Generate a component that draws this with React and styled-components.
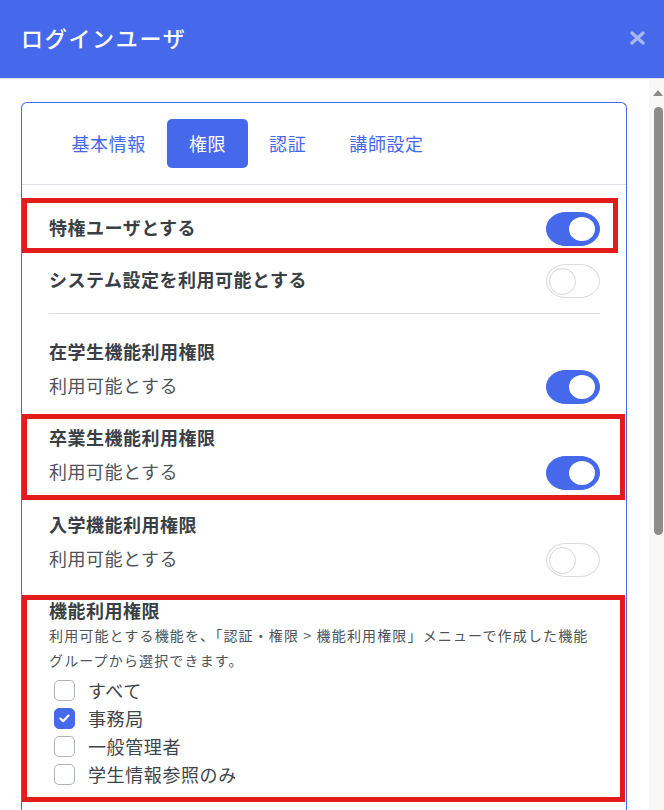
import React from "react";
import styled, { createGlobalStyle } from "styled-components";

const BLUE = "#4669ec";
const RED = "#e31b1b";

const Global = createGlobalStyle`
  html, body { margin: 0; padding: 0; background: #fff; }
  body { font-family: "Noto Sans CJK JP", "Noto Sans", sans-serif; }
  * { box-sizing: border-box; }
`;

const Modal = styled.div`
  height: 810px;
  display: flex;
  flex-direction: column;
  overflow: hidden;
`;

const Header = styled.header`
  height: 79px;
  flex: none;
  background: ${BLUE};
  border-bottom: 1px solid #dfe3ea;
  display: flex;
  align-items: center;
  justify-content: space-between;
  padding: 0 18px 0 21px;
`;

const Title = styled.h1`
  margin: 0;
  color: #fff;
  font-size: 22px;
  font-weight: 500;
  letter-spacing: 1.7px;
  line-height: 1;
  padding-bottom: 4px;
`;

const Close = styled.button`
  border: 0;
  background: transparent;
  padding: 0;
  width: 18px;
  height: 18px;
  display: flex;
  align-items: center;
  justify-content: center;
  margin-bottom: 3px;
`;

const Body = styled.div`
  flex: 1;
  display: flex;
  min-height: 0;
`;

const Content = styled.div`
  flex: 1;
  padding: 23px 22px 0 21px;
  overflow: hidden;
`;

const Track = styled.div`
  width: 15px;
  flex: none;
  background: #f8f8f8;
  display: flex;
  flex-direction: column;
  align-items: center;
`;

const Arrow = styled.div`
  margin-top: 11px;
  margin-left: 3px;
  width: 0;
  height: 0;
  border-left: 5px solid transparent;
  border-right: 5px solid transparent;
  border-bottom: 6px solid #8a8a8a;
`;

const Thumb = styled.div`
  margin-top: 11px;
  margin-left: 3px;
  width: 9px;
  height: 428px;
  border-radius: 5px;
  background: #8c8c8c;
`;

const Card = styled.div`
  border: 1px solid ${BLUE};
  border-bottom: 0;
  border-radius: 6px 6px 0 0;
  min-height: 800px;
`;

const Tabs = styled.nav`
  display: flex;
  padding: 16px 0 16px 28px;
  border-bottom: 1px solid #dee2e6;
`;

const Tab = styled.div`
  height: 49px;
  line-height: 49px;
  padding: 0 21.5px;
  font-size: 18px;
  letter-spacing: 0.6px;
  border-radius: 5px;
  color: ${(p) => (p.$active ? "#fff" : BLUE)};
  background: ${(p) => (p.$active ? BLUE : "transparent")};
`;

const Section = styled.div`
  padding: 0 26px 0 27px;
  color: #3c4147;
`;

const Highlight = styled.div`
  border: 5px solid ${RED};
  margin: ${(p) => p.$mt}px -${(p) => p.$right}px 0 -27px;
  padding: ${(p) => p.$pt}px ${(p) => p.$right - 5}px ${(p) => p.$pb}px 22px;
`;

const Row = styled.div`
  display: flex;
  justify-content: space-between;
  align-items: flex-start;
  margin-top: ${(p) => p.$mt || 0}px;
`;

const Label = styled.div`
  font-size: 18px;
  letter-spacing: 0.5px;
  line-height: 30px;
  font-weight: ${(p) => (p.$bold ? 700 : 400)};
  color: ${(p) => (p.$bold ? "#3a3f45" : "#4d5359")};
`;

const BlockTitle = styled.div`
  font-size: 18px;
  letter-spacing: 0.5px;
  line-height: ${(p) => p.$lh || 28}px;
  font-weight: 700;
  color: #3a3f45;
  margin-top: ${(p) => p.$mt || 0}px;
`;

const Divider = styled.hr`
  border: 0;
  border-top: 1px solid #dee2e6;
  margin: 15px 0 0;
`;

const SwitchTrack = styled.div`
  width: 54px;
  height: 34px;
  flex: none;
  border-radius: 20px / 17px;
  border: 1px solid ${(p) => (p.$on ? BLUE : "#dcdcdc")};
  background: ${(p) => (p.$on ? BLUE : "#fff")};
  display: flex;
  align-items: center;
  justify-content: ${(p) => (p.$on ? "flex-end" : "flex-start")};
  padding: 0 4px 0 2px;
`;

const Knob = styled.div`
  width: ${(p) => (p.$on ? 26 : 27)}px;
  height: ${(p) => (p.$on ? 24 : 27)}px;
  border-radius: 50%;
  background: #fff;
  border: ${(p) => (p.$on ? "0" : "1px solid #d6d6d6")};
`;

const Switch = ({ on }) => (
  <SwitchTrack $on={on}>
    <Knob $on={on} />
  </SwitchTrack>
);

const Desc = styled.p`
  margin: 2px 0 0;
  font-size: 14px;
  letter-spacing: 1.15px;
  line-height: 25px;
  color: #4d5359;
`;

const CheckList = styled.div`
  margin-top: 3px;
  display: flex;
  flex-direction: column;
`;

const CheckRow = styled.label`
  display: flex;
  align-items: center;
  height: 28px;
  padding-left: 5px;
  gap: 13px;
`;

const Box = styled.span`
  width: 21px;
  height: 21px;
  border-radius: 5px;
  border: 1px solid ${(p) => (p.$checked ? BLUE : "#aeb4bb")};
  background: ${(p) => (p.$checked ? BLUE : "#fff")};
  display: flex;
  align-items: center;
  justify-content: center;
`;

const CheckText = styled.span`
  font-size: 18px;
  letter-spacing: 0.6px;
  color: #3f454b;
`;

const Check = ({ label, checked }) => (
  <CheckRow>
    <Box $checked={checked}>
      {checked && (
        <svg width="11" height="9" viewBox="0 0 11 9">
          <path d="M1.5 4.6 L4.2 7.2 L9.5 1.6" fill="none" stroke="#fff" strokeWidth="2.2" strokeLinecap="round" strokeLinejoin="round" />
        </svg>
      )}
    </Box>
    <CheckText>{label}</CheckText>
  </CheckRow>
);

export default function App() {
  return (
    <>
      <Global />
      <Modal>
        <Header>
          <Title>ログインユーザ</Title>
          <Close aria-label="close">
            <svg width="15" height="14" viewBox="0 0 15 14">
              <path d="M2 2 L13 12 M13 2 L2 12" stroke="#a6b6f6" strokeWidth="3.4" strokeLinecap="round" />
            </svg>
          </Close>
        </Header>
        <Body>
          <Content>
            <Card>
              <Tabs>
                <Tab>基本情報</Tab>
                <Tab $active>権限</Tab>
                <Tab>認証</Tab>
                <Tab>講師設定</Tab>
              </Tabs>
              <Section>
                <Highlight $mt={13} $right={18} $pt={9} $pb={2}>
                  <Row>
                    <Label $bold>特権ユーザとする</Label>
                    <Switch on />
                  </Row>
                </Highlight>
                <Row $mt={11}>
                  <Label $bold>システム設定を利用可能とする</Label>
                  <Switch />
                </Row>
                <Divider />
                <BlockTitle $mt={23}>在学生機能利用権限</BlockTitle>
                <Row $mt={5}>
                  <Label>利用可能とする</Label>
                  <Switch on />
                </Row>
                <Highlight $mt={10} $right={25} $pt={4} $pb={5}>
                  <BlockTitle>卒業生機能利用権限</BlockTitle>
                  <Row $mt={5}>
                    <Label>利用可能とする</Label>
                    <Switch on />
                  </Row>
                </Highlight>
                <BlockTitle $mt={10}>入学機能利用権限</BlockTitle>
                <Row $mt={5}>
                  <Label>利用可能とする</Label>
                  <Switch />
                </Row>
                <Highlight $mt={18} $right={25} $pt={0} $pb={9}>
                  <BlockTitle $lh={21}>機能利用権限</BlockTitle>
                  <Desc>
                    利用可能とする機能を、「認証・権限 &gt; 機能利用権限」メニューで作成した機能
                    <br />
                    グループから選択できます。
                  </Desc>
                  <CheckList>
                    <Check label="すべて" />
                    <Check label="事務局" checked />
                    <Check label="一般管理者" />
                    <Check label="学生情報参照のみ" />
                  </CheckList>
                </Highlight>
              </Section>
            </Card>
          </Content>
          <Track>
            <Arrow />
            <Thumb />
          </Track>
        </Body>
      </Modal>
    </>
  );
}
